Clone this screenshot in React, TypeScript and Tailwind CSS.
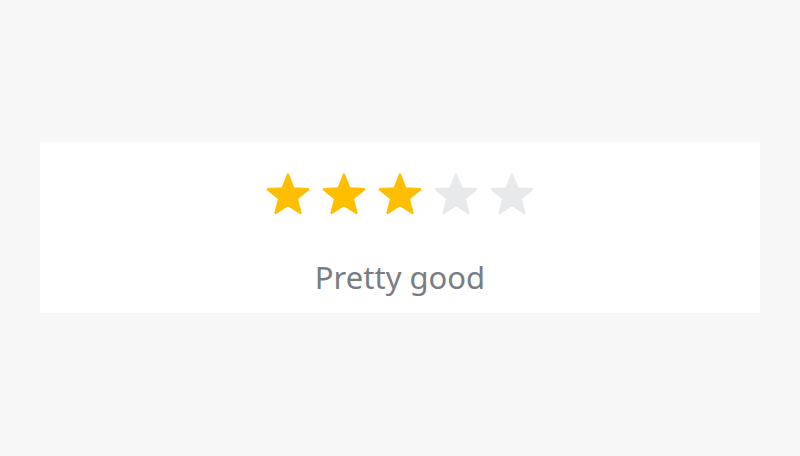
import React from "react";

function starPoints(cx: number, cy: number, R: number, r: number) {
  const pts: string[] = [];
  for (let i = 0; i < 10; i++) {
    const rad = i % 2 === 0 ? R : r;
    const a = (Math.PI / 5) * i - Math.PI / 2;
    pts.push(`${(cx + rad * Math.cos(a)).toFixed(2)},${(cy + rad * Math.sin(a)).toFixed(2)}`);
  }
  return pts.join(" ");
}

function Star({ filled }: { filled: boolean }) {
  const color = filled ? "#FFBE00" : "#E8E9EB";
  return (
    <svg width="48" height="48" viewBox="0 0 48 48">
      <polygon
        points={starPoints(24, 24.8, 21.2, 9.2)}
        fill={color}
        stroke={color}
        strokeWidth="2.4"
        strokeLinejoin="round"
      />
    </svg>
  );
}

export default function App() {
  return (
    <div className="w-[800px] h-[456px] bg-[#f7f7f7] pt-[142px] px-[40px]">
      <div className="bg-white h-[171px] flex flex-col items-center pt-[29px]">
        <div className="flex gap-[8px]">
          {[0, 1, 2, 3, 4].map((i) => (
            <Star key={i} filled={i < 3} />
          ))}
        </div>
        <div
          className="mt-[38px] text-[31px] leading-[40px] text-[#787d84]"
          style={{ fontFamily: '"Noto Sans", sans-serif' }}
        >
          Pretty good
        </div>
      </div>
    </div>
  );
}
